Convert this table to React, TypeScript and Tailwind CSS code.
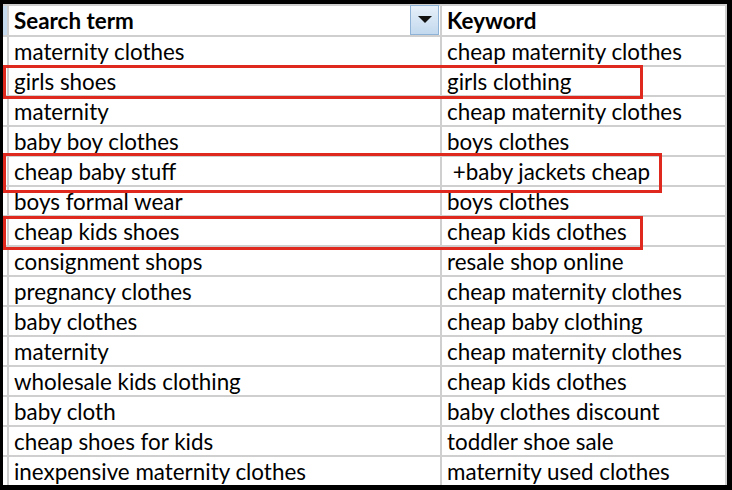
import React from 'react';

const rows: [string, string][] = [
  ['maternity clothes', 'cheap maternity clothes'],
  ['girls shoes', 'girls clothing'],
  ['maternity', 'cheap maternity clothes'],
  ['baby boy clothes', 'boys clothes'],
  ['cheap baby stuff', '\u00a0+baby jackets cheap'],
  ['boys formal wear', 'boys clothes'],
  ['cheap kids shoes', 'cheap kids clothes'],
  ['consignment shops', 'resale shop online'],
  ['pregnancy clothes', 'cheap maternity clothes'],
  ['baby clothes', 'cheap baby clothing'],
  ['maternity', 'cheap maternity clothes'],
  ['wholesale kids clothing', 'cheap kids clothes'],
  ['baby cloth', 'baby clothes discount'],
  ['cheap shoes for kids', 'toddler shoe sale'],
  ['inexpensive maternity clothes', 'maternity used clothes'],
];

const App: React.FC = () => {
  return (
    <div
      className="relative w-[732px] h-[490px] bg-black pt-[4px] pl-[3px] pr-[5px] pb-[5px] overflow-hidden"
      style={{ fontFamily: 'Lato, "Open Sans", sans-serif' }}
    >
      <div className="grid grid-cols-[4px_431px_1fr] grid-rows-[29px_repeat(15,28px)] gap-[2px] bg-[#cfcfcf] pt-[2px] pr-[2px] h-full text-[22.4px] text-black leading-none">
        {/* header */}
        <div className="bg-[#c6daee]" />
        <div className="bg-white flex items-center pl-[5px]">
          <span className="font-bold pt-[2px]">Search term</span>
          <div className="ml-auto mr-[1px] -mt-[1px] h-[30px] w-[29px] border border-[#8fb3d6] bg-gradient-to-b from-[#e6f0f9] to-[#c3d9ee] flex items-center justify-center">
            <svg width="14" height="8" viewBox="0 0 14 8">
              <polygon points="0,0 14,0 7,7" fill="#111" />
            </svg>
          </div>
        </div>
        <div className="bg-white flex items-center pl-[5px]">
          <span className="font-bold pt-[2px]">Keyword</span>
        </div>
        {rows.map(([term, kw], i) => (
          <React.Fragment key={i}>
            <div className="bg-white" />
            <div className="bg-white flex items-center pl-[5px] pt-[2px] whitespace-pre">{term}</div>
            <div className="bg-white flex items-center pl-[5px] pt-[2px] whitespace-pre">{kw}</div>
          </React.Fragment>
        ))}
      </div>

      {/* red highlight boxes */}
      <div className="absolute left-[3px] top-[65px] w-[640px] h-[34px] border-[3px] border-[#e0291e]" />
      <div className="absolute left-[3px] top-[153px] w-[659px] h-[40px] border-[3px] border-[#e0291e]" />
      <div className="absolute left-[3px] top-[216px] w-[640px] h-[34px] border-[3px] border-[#e0291e]" />
    </div>
  );
};

export default App;
